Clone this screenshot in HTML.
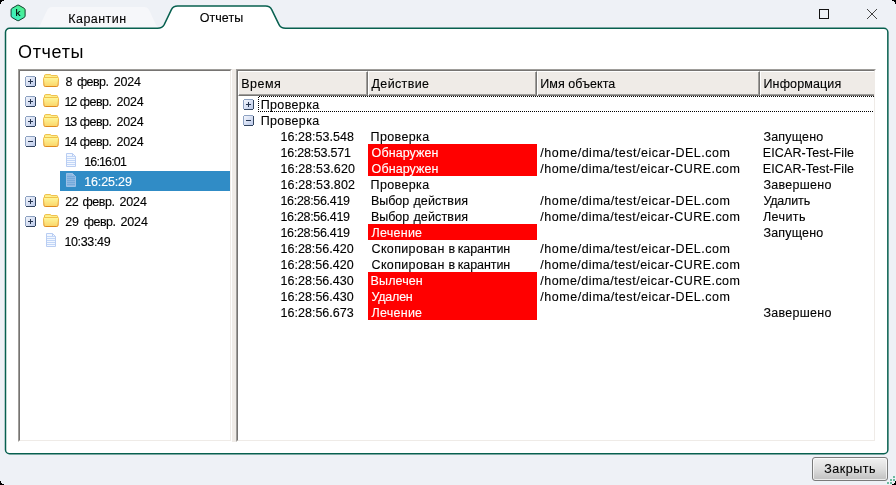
<!DOCTYPE html>
<html lang="ru"><head><meta charset="utf-8"><title>Отчеты</title>
<style>
html,body{margin:0;padding:0;background:#eef1f6}
body{width:896px;height:485px;position:relative;overflow:hidden;background:#eef1f6;font-family:"Liberation Sans",sans-serif;color:#000}
.abs{position:absolute;display:block}
.t{position:absolute;white-space:pre;line-height:16px;height:16px;-webkit-text-stroke:0.12px currentColor}
.frame{position:absolute;box-sizing:border-box;background:#fff;border:1px solid;border-color:#9f9d9a #fff #fff #9f9d9a}
.frame>.in{position:absolute;left:0;top:0;right:0;bottom:0;border:1px solid;border-color:#767472 #efebe7 #efebe7 #767472}
.red{position:absolute;left:368px;width:169px;height:16px;background:#ff0000}
.hs{position:absolute;top:71px;height:25px;box-sizing:border-box;background:#efebe7;border-left:1px solid #fff;border-top:1px solid #fff}
.hs.b{border-right:1px solid #767472;border-bottom:1px solid #767472}
.hs .i{position:absolute;left:0;top:0;right:0;bottom:0;border-right:1px solid #9f9d9a;border-bottom:1px solid #9f9d9a}
</style></head><body>
<svg class="abs" style="left:0;top:0;will-change:transform" width="896" height="485" viewBox="0 0 896 485">
<path d="M34.5 28 C38.5 28 39.8 26 41.2 22.8 L46.8 11 C48.4 7.6 50 7 53 7 H143.5 C146.5 7 148 7.6 149.6 11 L155 22.8 C156.4 26 157.6 28 161.5 28 Z" fill="#f6f7fa"/>
<path d="M9.5 28.25 H157.5 Q162.3 28.25 164.2 24.6 L171.4 9.6 Q173.1 6 177.6 6 H265.6 Q270 6 271.7 9.6 L279 24.6 Q280.8 28.25 285.5 28.25 H883.85 A4 4 0 0 1 887.85 32.25 V449.7 A4 4 0 0 1 883.85 453.7 H9.5 A4 4 0 0 1 5.5 449.7 V32.25 A4 4 0 0 1 9.5 28.25 Z" fill="#fff" stroke="#07604f" stroke-width="1.5"/>
<g shape-rendering="crispEdges" fill="#000">
<rect x="0" y="0" width="4" height="1"/><rect x="0" y="1" width="2" height="1"/><rect x="0" y="2" width="1" height="2"/>
<rect x="892" y="0" width="4" height="1"/><rect x="894" y="1" width="2" height="1"/><rect x="895" y="2" width="1" height="2"/>
<rect x="0" y="484" width="4" height="1"/><rect x="0" y="483" width="2" height="1"/><rect x="0" y="481" width="1" height="2"/>
<rect x="892" y="484" width="4" height="1"/><rect x="894" y="483" width="2" height="1"/><rect x="895" y="481" width="1" height="2"/>
</g>
<g shape-rendering="crispEdges" fill="#6cba9f">
<rect x="893" y="476" width="2" height="2"/><rect x="890" y="479" width="2" height="2"/><rect x="893" y="479" width="2" height="2"/>
<rect x="887" y="482" width="2" height="2"/><rect x="890" y="482" width="2" height="2"/>
</g>
<rect x="819.5" y="9.5" width="9" height="9" fill="none" stroke="#111" stroke-width="1" shape-rendering="crispEdges"/>
<path d="M867 9 L877 19 M877 9 L867 19" stroke="#3a3a3a" stroke-width="0.95" fill="none"/>
<defs><linearGradient id="hx" x1="1" y1="0" x2="0" y2="1"><stop offset="0" stop-color="#52ee7e"/><stop offset="1" stop-color="#38f0d0"/></linearGradient></defs>
<path d="M17.23 5.30 Q18.10 4.80 18.97 5.30 L24.25 8.35 Q25.11 8.85 25.11 9.85 L25.11 15.95 Q25.11 16.95 24.25 17.45 L18.97 20.50 Q18.10 21.00 17.23 20.50 L11.95 17.45 Q11.09 16.95 11.09 15.95 L11.09 9.85 Q11.09 8.85 11.95 8.35 Z" fill="url(#hx)" stroke="#113f2e" stroke-width="1"/>
<text x="15.45" y="16" font-family="Liberation Sans, sans-serif" font-size="9.8" fill="#000" stroke="#000" stroke-width="0.2">k</text>
</svg>

<div class="frame" style="left:18px;top:69px;width:214px;height:373px"><div class="in"></div></div>
<div class="abs" style="left:232px;top:69px;width:4px;height:373px;background:#efebe7"></div>
<div class="frame" style="left:236px;top:69px;width:640px;height:373px"><div class="in"></div></div>
<div class="abs" style="left:60px;top:171px;width:170px;height:20px;background:#308cc6"></div>

<div class="hs b" style="left:238px;width:130px"><div class="i"></div></div>
<div class="hs b" style="left:368px;width:169px"><div class="i"></div></div>
<div class="hs b" style="left:537px;width:223px"><div class="i"></div></div>
<div class="hs" style="left:760px;width:114px;border-bottom:1px solid #767472"><div class="i" style="border-right:none"></div></div>
<div class="red" style="top:144px"></div><div class="red" style="top:160px"></div><div class="red" style="top:224px"></div><div class="red" style="top:272px"></div><div class="red" style="top:288px"></div><div class="red" style="top:304px"></div>
<div class="abs" style="left:258px;top:96px;width:616px;height:1px;background:repeating-linear-gradient(90deg,transparent 0 1px,#000 1px 2px)"></div>
<div class="abs" style="left:258px;top:111px;width:616px;height:1px;background:repeating-linear-gradient(90deg,#000 0 1px,transparent 1px 2px)"></div>
<div class="abs" style="left:258px;top:96px;width:1px;height:16px;background:repeating-linear-gradient(180deg,transparent 0 1px,#000 1px 2px)"></div>
<svg class="abs" style="left:25px;top:76px" width="11" height="11" viewBox="0 0 11 11" shape-rendering="crispEdges">
<defs><linearGradient id="eg" x1="0" y1="0" x2="1" y2="1"><stop offset="0" stop-color="#f2f5fc"/><stop offset="1" stop-color="#bccaea"/></linearGradient></defs>
<rect x="1" y="1" width="9" height="9" fill="url(#eg)"/>
<rect x="1" y="0" width="9" height="1" fill="#8ea2c2"/><rect x="0" y="1" width="1" height="9" fill="#8ea2c2"/>
<rect x="1" y="10" width="9" height="1" fill="#31445f"/><rect x="10" y="1" width="1" height="9" fill="#31445f"/>
<rect x="3" y="5" width="5" height="1" fill="#24344f"/><rect x="5" y="3" width="1" height="5" fill="#24344f"/></svg><svg class="abs" style="left:25px;top:96px" width="11" height="11" viewBox="0 0 11 11" shape-rendering="crispEdges">
<defs><linearGradient id="eg" x1="0" y1="0" x2="1" y2="1"><stop offset="0" stop-color="#f2f5fc"/><stop offset="1" stop-color="#bccaea"/></linearGradient></defs>
<rect x="1" y="1" width="9" height="9" fill="url(#eg)"/>
<rect x="1" y="0" width="9" height="1" fill="#8ea2c2"/><rect x="0" y="1" width="1" height="9" fill="#8ea2c2"/>
<rect x="1" y="10" width="9" height="1" fill="#31445f"/><rect x="10" y="1" width="1" height="9" fill="#31445f"/>
<rect x="3" y="5" width="5" height="1" fill="#24344f"/><rect x="5" y="3" width="1" height="5" fill="#24344f"/></svg><svg class="abs" style="left:25px;top:116px" width="11" height="11" viewBox="0 0 11 11" shape-rendering="crispEdges">
<defs><linearGradient id="eg" x1="0" y1="0" x2="1" y2="1"><stop offset="0" stop-color="#f2f5fc"/><stop offset="1" stop-color="#bccaea"/></linearGradient></defs>
<rect x="1" y="1" width="9" height="9" fill="url(#eg)"/>
<rect x="1" y="0" width="9" height="1" fill="#8ea2c2"/><rect x="0" y="1" width="1" height="9" fill="#8ea2c2"/>
<rect x="1" y="10" width="9" height="1" fill="#31445f"/><rect x="10" y="1" width="1" height="9" fill="#31445f"/>
<rect x="3" y="5" width="5" height="1" fill="#24344f"/><rect x="5" y="3" width="1" height="5" fill="#24344f"/></svg><svg class="abs" style="left:25px;top:196px" width="11" height="11" viewBox="0 0 11 11" shape-rendering="crispEdges">
<defs><linearGradient id="eg" x1="0" y1="0" x2="1" y2="1"><stop offset="0" stop-color="#f2f5fc"/><stop offset="1" stop-color="#bccaea"/></linearGradient></defs>
<rect x="1" y="1" width="9" height="9" fill="url(#eg)"/>
<rect x="1" y="0" width="9" height="1" fill="#8ea2c2"/><rect x="0" y="1" width="1" height="9" fill="#8ea2c2"/>
<rect x="1" y="10" width="9" height="1" fill="#31445f"/><rect x="10" y="1" width="1" height="9" fill="#31445f"/>
<rect x="3" y="5" width="5" height="1" fill="#24344f"/><rect x="5" y="3" width="1" height="5" fill="#24344f"/></svg><svg class="abs" style="left:25px;top:216px" width="11" height="11" viewBox="0 0 11 11" shape-rendering="crispEdges">
<defs><linearGradient id="eg" x1="0" y1="0" x2="1" y2="1"><stop offset="0" stop-color="#f2f5fc"/><stop offset="1" stop-color="#bccaea"/></linearGradient></defs>
<rect x="1" y="1" width="9" height="9" fill="url(#eg)"/>
<rect x="1" y="0" width="9" height="1" fill="#8ea2c2"/><rect x="0" y="1" width="1" height="9" fill="#8ea2c2"/>
<rect x="1" y="10" width="9" height="1" fill="#31445f"/><rect x="10" y="1" width="1" height="9" fill="#31445f"/>
<rect x="3" y="5" width="5" height="1" fill="#24344f"/><rect x="5" y="3" width="1" height="5" fill="#24344f"/></svg><svg class="abs" style="left:25px;top:136px" width="11" height="11" viewBox="0 0 11 11" shape-rendering="crispEdges">
<defs><linearGradient id="eg" x1="0" y1="0" x2="1" y2="1"><stop offset="0" stop-color="#f2f5fc"/><stop offset="1" stop-color="#bccaea"/></linearGradient></defs>
<rect x="1" y="1" width="9" height="9" fill="url(#eg)"/>
<rect x="1" y="0" width="9" height="1" fill="#8ea2c2"/><rect x="0" y="1" width="1" height="9" fill="#8ea2c2"/>
<rect x="1" y="10" width="9" height="1" fill="#31445f"/><rect x="10" y="1" width="1" height="9" fill="#31445f"/>
<rect x="3" y="5" width="5" height="1" fill="#24344f"/></svg><svg class="abs" style="left:43px;top:74px" width="16" height="13" viewBox="0 0 16 13">
<defs><linearGradient id="fg" x1="0" y1="0" x2="0" y2="1"><stop offset="0" stop-color="#fdf79c"/><stop offset="1" stop-color="#fbd468"/></linearGradient>
<linearGradient id="fb" x1="0" y1="0" x2="0" y2="1"><stop offset="0" stop-color="#f3c24a"/><stop offset="1" stop-color="#e08a1e"/></linearGradient></defs>
<path d="M1.5 3.5 V1.8 Q1.5 0.6 2.7 0.6 H7.2 Q8 0.6 8.3 1.6 H13.8 Q14.6 1.6 14.6 2.6 V4" fill="#fcf390" stroke="#eebb44" stroke-width="1"/>
<path d="M1.1 3.5 H14.9 Q15.6 3.5 15.5 4.4 L15.1 11.2 Q15 12.5 13.8 12.5 H2.2 Q1 12.5 0.9 11.2 L0.5 4.4 Q0.4 3.5 1.1 3.5 Z" fill="url(#fg)" stroke="url(#fb)" stroke-width="1"/>
</svg><svg class="abs" style="left:43px;top:94px" width="16" height="13" viewBox="0 0 16 13">
<defs><linearGradient id="fg" x1="0" y1="0" x2="0" y2="1"><stop offset="0" stop-color="#fdf79c"/><stop offset="1" stop-color="#fbd468"/></linearGradient>
<linearGradient id="fb" x1="0" y1="0" x2="0" y2="1"><stop offset="0" stop-color="#f3c24a"/><stop offset="1" stop-color="#e08a1e"/></linearGradient></defs>
<path d="M1.5 3.5 V1.8 Q1.5 0.6 2.7 0.6 H7.2 Q8 0.6 8.3 1.6 H13.8 Q14.6 1.6 14.6 2.6 V4" fill="#fcf390" stroke="#eebb44" stroke-width="1"/>
<path d="M1.1 3.5 H14.9 Q15.6 3.5 15.5 4.4 L15.1 11.2 Q15 12.5 13.8 12.5 H2.2 Q1 12.5 0.9 11.2 L0.5 4.4 Q0.4 3.5 1.1 3.5 Z" fill="url(#fg)" stroke="url(#fb)" stroke-width="1"/>
</svg><svg class="abs" style="left:43px;top:114px" width="16" height="13" viewBox="0 0 16 13">
<defs><linearGradient id="fg" x1="0" y1="0" x2="0" y2="1"><stop offset="0" stop-color="#fdf79c"/><stop offset="1" stop-color="#fbd468"/></linearGradient>
<linearGradient id="fb" x1="0" y1="0" x2="0" y2="1"><stop offset="0" stop-color="#f3c24a"/><stop offset="1" stop-color="#e08a1e"/></linearGradient></defs>
<path d="M1.5 3.5 V1.8 Q1.5 0.6 2.7 0.6 H7.2 Q8 0.6 8.3 1.6 H13.8 Q14.6 1.6 14.6 2.6 V4" fill="#fcf390" stroke="#eebb44" stroke-width="1"/>
<path d="M1.1 3.5 H14.9 Q15.6 3.5 15.5 4.4 L15.1 11.2 Q15 12.5 13.8 12.5 H2.2 Q1 12.5 0.9 11.2 L0.5 4.4 Q0.4 3.5 1.1 3.5 Z" fill="url(#fg)" stroke="url(#fb)" stroke-width="1"/>
</svg><svg class="abs" style="left:43px;top:134px" width="16" height="13" viewBox="0 0 16 13">
<defs><linearGradient id="fg" x1="0" y1="0" x2="0" y2="1"><stop offset="0" stop-color="#fdf79c"/><stop offset="1" stop-color="#fbd468"/></linearGradient>
<linearGradient id="fb" x1="0" y1="0" x2="0" y2="1"><stop offset="0" stop-color="#f3c24a"/><stop offset="1" stop-color="#e08a1e"/></linearGradient></defs>
<path d="M1.5 3.5 V1.8 Q1.5 0.6 2.7 0.6 H7.2 Q8 0.6 8.3 1.6 H13.8 Q14.6 1.6 14.6 2.6 V4" fill="#fcf390" stroke="#eebb44" stroke-width="1"/>
<path d="M1.1 3.5 H14.9 Q15.6 3.5 15.5 4.4 L15.1 11.2 Q15 12.5 13.8 12.5 H2.2 Q1 12.5 0.9 11.2 L0.5 4.4 Q0.4 3.5 1.1 3.5 Z" fill="url(#fg)" stroke="url(#fb)" stroke-width="1"/>
</svg><svg class="abs" style="left:43px;top:194px" width="16" height="13" viewBox="0 0 16 13">
<defs><linearGradient id="fg" x1="0" y1="0" x2="0" y2="1"><stop offset="0" stop-color="#fdf79c"/><stop offset="1" stop-color="#fbd468"/></linearGradient>
<linearGradient id="fb" x1="0" y1="0" x2="0" y2="1"><stop offset="0" stop-color="#f3c24a"/><stop offset="1" stop-color="#e08a1e"/></linearGradient></defs>
<path d="M1.5 3.5 V1.8 Q1.5 0.6 2.7 0.6 H7.2 Q8 0.6 8.3 1.6 H13.8 Q14.6 1.6 14.6 2.6 V4" fill="#fcf390" stroke="#eebb44" stroke-width="1"/>
<path d="M1.1 3.5 H14.9 Q15.6 3.5 15.5 4.4 L15.1 11.2 Q15 12.5 13.8 12.5 H2.2 Q1 12.5 0.9 11.2 L0.5 4.4 Q0.4 3.5 1.1 3.5 Z" fill="url(#fg)" stroke="url(#fb)" stroke-width="1"/>
</svg><svg class="abs" style="left:43px;top:214px" width="16" height="13" viewBox="0 0 16 13">
<defs><linearGradient id="fg" x1="0" y1="0" x2="0" y2="1"><stop offset="0" stop-color="#fdf79c"/><stop offset="1" stop-color="#fbd468"/></linearGradient>
<linearGradient id="fb" x1="0" y1="0" x2="0" y2="1"><stop offset="0" stop-color="#f3c24a"/><stop offset="1" stop-color="#e08a1e"/></linearGradient></defs>
<path d="M1.5 3.5 V1.8 Q1.5 0.6 2.7 0.6 H7.2 Q8 0.6 8.3 1.6 H13.8 Q14.6 1.6 14.6 2.6 V4" fill="#fcf390" stroke="#eebb44" stroke-width="1"/>
<path d="M1.1 3.5 H14.9 Q15.6 3.5 15.5 4.4 L15.1 11.2 Q15 12.5 13.8 12.5 H2.2 Q1 12.5 0.9 11.2 L0.5 4.4 Q0.4 3.5 1.1 3.5 Z" fill="url(#fg)" stroke="url(#fb)" stroke-width="1"/>
</svg><svg class="abs" style="left:66px;top:153px" width="10" height="14" viewBox="0 0 10 14">
<path d="M0.5 0.5 H6.5 L9.5 3.5 V13.5 H0.5 Z" fill="#f2f7ff" stroke="#b9cdf2" stroke-width="1"/>
<path d="M6.5 0.5 V3.5 H9.5" fill="none" stroke="#b9cdf2" stroke-width="1"/><rect x="1" y="3" width="8" height="1" fill="#c2d6f7" shape-rendering="crispEdges"/><rect x="1" y="5" width="8" height="1" fill="#c2d6f7" shape-rendering="crispEdges"/><rect x="1" y="7" width="8" height="1" fill="#c2d6f7" shape-rendering="crispEdges"/><rect x="1" y="9" width="8" height="1" fill="#c2d6f7" shape-rendering="crispEdges"/><rect x="1" y="11" width="8" height="1" fill="#c2d6f7" shape-rendering="crispEdges"/></svg><svg class="abs" style="left:66px;top:173px" width="10" height="14" viewBox="0 0 10 14">
<path d="M0.5 0.5 H6.5 L9.5 3.5 V13.5 H0.5 Z" fill="#8bb8e2" stroke="#9cc0e6" stroke-width="1"/>
<path d="M6.5 0.5 V3.5 H9.5" fill="none" stroke="#9cc0e6" stroke-width="1"/><rect x="1" y="3" width="8" height="1" fill="#74a9db" shape-rendering="crispEdges"/><rect x="1" y="5" width="8" height="1" fill="#74a9db" shape-rendering="crispEdges"/><rect x="1" y="7" width="8" height="1" fill="#74a9db" shape-rendering="crispEdges"/><rect x="1" y="9" width="8" height="1" fill="#74a9db" shape-rendering="crispEdges"/><rect x="1" y="11" width="8" height="1" fill="#74a9db" shape-rendering="crispEdges"/></svg><svg class="abs" style="left:46px;top:233px" width="10" height="14" viewBox="0 0 10 14">
<path d="M0.5 0.5 H6.5 L9.5 3.5 V13.5 H0.5 Z" fill="#f2f7ff" stroke="#b9cdf2" stroke-width="1"/>
<path d="M6.5 0.5 V3.5 H9.5" fill="none" stroke="#b9cdf2" stroke-width="1"/><rect x="1" y="3" width="8" height="1" fill="#c2d6f7" shape-rendering="crispEdges"/><rect x="1" y="5" width="8" height="1" fill="#c2d6f7" shape-rendering="crispEdges"/><rect x="1" y="7" width="8" height="1" fill="#c2d6f7" shape-rendering="crispEdges"/><rect x="1" y="9" width="8" height="1" fill="#c2d6f7" shape-rendering="crispEdges"/><rect x="1" y="11" width="8" height="1" fill="#c2d6f7" shape-rendering="crispEdges"/></svg><svg class="abs" style="left:243px;top:99px" width="11" height="11" viewBox="0 0 11 11" shape-rendering="crispEdges">
<defs><linearGradient id="eg" x1="0" y1="0" x2="1" y2="1"><stop offset="0" stop-color="#f2f5fc"/><stop offset="1" stop-color="#bccaea"/></linearGradient></defs>
<rect x="1" y="1" width="9" height="9" fill="url(#eg)"/>
<rect x="1" y="0" width="9" height="1" fill="#8ea2c2"/><rect x="0" y="1" width="1" height="9" fill="#8ea2c2"/>
<rect x="1" y="10" width="9" height="1" fill="#31445f"/><rect x="10" y="1" width="1" height="9" fill="#31445f"/>
<rect x="3" y="5" width="5" height="1" fill="#24344f"/><rect x="5" y="3" width="1" height="5" fill="#24344f"/></svg><svg class="abs" style="left:243px;top:115px" width="11" height="11" viewBox="0 0 11 11" shape-rendering="crispEdges">
<defs><linearGradient id="eg" x1="0" y1="0" x2="1" y2="1"><stop offset="0" stop-color="#f2f5fc"/><stop offset="1" stop-color="#bccaea"/></linearGradient></defs>
<rect x="1" y="1" width="9" height="9" fill="url(#eg)"/>
<rect x="1" y="0" width="9" height="1" fill="#8ea2c2"/><rect x="0" y="1" width="1" height="9" fill="#8ea2c2"/>
<rect x="1" y="10" width="9" height="1" fill="#31445f"/><rect x="10" y="1" width="1" height="9" fill="#31445f"/>
<rect x="3" y="5" width="5" height="1" fill="#24344f"/></svg>
<div class="abs" style="left:812px;top:457px;width:76px;height:24px;box-sizing:border-box;border:1px solid #7a7a7a;border-radius:3px;background:linear-gradient(#f1f1f1,#dddddd 50%,#c0c0c0);box-shadow:inset 0 0 0 1px rgba(255,255,255,.7)"></div>
<div class="abs" style="left:0;top:0;width:896px;height:485px;will-change:transform"><div class="chrome"><span class="t" style="left:68.30px;top:10.67px;font-size:12.5px;letter-spacing:0.450px">Карантин</span><span class="t" style="left:199.70px;top:9.67px;font-size:12.5px;letter-spacing:0.056px">Отчеты</span><span class="t" style="left:18.00px;top:43.76px;font-size:18px;letter-spacing:0.664px;-webkit-text-stroke:0">Отчеты</span><span class="t" style="left:824.30px;top:460.67px;font-size:12.5px;letter-spacing:0.528px">Закрыть</span></div>
<div class="tree"><span class="t" style="left:65.60px;top:73.67px;font-size:12.5px;letter-spacing:0.000px">8 </span><span class="t" style="left:76.90px;top:73.67px;font-size:12.5px;letter-spacing:-0.582px">февр. </span><span class="t" style="left:113.75px;top:73.67px;font-size:12.5px;letter-spacing:-0.202px">2024</span><span class="t" style="left:64.45px;top:93.67px;font-size:12.5px;letter-spacing:-1.100px">12 </span><span class="t" style="left:79.75px;top:93.67px;font-size:12.5px;letter-spacing:-0.520px">февр. </span><span class="t" style="left:116.50px;top:93.67px;font-size:12.5px;letter-spacing:-0.202px">2024</span><span class="t" style="left:64.45px;top:113.67px;font-size:12.5px;letter-spacing:-1.100px">13 </span><span class="t" style="left:79.75px;top:113.67px;font-size:12.5px;letter-spacing:-0.520px">февр. </span><span class="t" style="left:116.50px;top:113.67px;font-size:12.5px;letter-spacing:-0.202px">2024</span><span class="t" style="left:64.45px;top:133.67px;font-size:12.5px;letter-spacing:-1.100px">14 </span><span class="t" style="left:79.75px;top:133.67px;font-size:12.5px;letter-spacing:-0.520px">февр. </span><span class="t" style="left:116.50px;top:133.67px;font-size:12.5px;letter-spacing:-0.202px">2024</span><span class="t" style="left:84.20px;top:153.67px;font-size:12.5px;letter-spacing:-0.858px">16:16:01</span><span class="t" style="left:84.20px;top:173.67px;font-size:12.5px;letter-spacing:-0.144px;color:#fff">16:25:29</span><span class="t" style="left:65.25px;top:193.67px;font-size:12.5px;letter-spacing:-0.452px">22 </span><span class="t" style="left:82.50px;top:193.67px;font-size:12.5px;letter-spacing:-0.482px">февр. </span><span class="t" style="left:119.40px;top:193.67px;font-size:12.5px;letter-spacing:-0.119px">2024</span><span class="t" style="left:65.25px;top:213.67px;font-size:12.5px;letter-spacing:-0.202px">29 </span><span class="t" style="left:83.75px;top:213.67px;font-size:12.5px;letter-spacing:-0.545px">февр. </span><span class="t" style="left:120.40px;top:213.67px;font-size:12.5px;letter-spacing:-0.119px">2024</span><span class="t" style="left:64.40px;top:233.67px;font-size:12.5px;letter-spacing:-0.344px">10:33:49</span></div>
<div class="thead"><span class="t" style="left:241.25px;top:75.67px;font-size:12.5px;letter-spacing:0.479px">Время</span><span class="t" style="left:371.50px;top:75.67px;font-size:12.5px;letter-spacing:0.357px">Действие</span><span class="t" style="left:540.25px;top:75.67px;font-size:12.5px;letter-spacing:0.063px">Имя объекта</span><span class="t" style="left:763.50px;top:75.67px;font-size:12.5px;letter-spacing:0.126px">Информация</span></div>
<div class="row"><span class="t" style="left:260.70px;top:96.67px;font-size:12.5px;letter-spacing:0.366px">Проверка</span></div>
<div class="row"><span class="t" style="left:260.70px;top:112.67px;font-size:12.5px;letter-spacing:0.366px">Проверка</span></div>
<div class="row"><span class="t" style="left:280.45px;top:128.67px;font-size:12.5px;letter-spacing:0.047px">16:28:53.548</span><span class="t" style="left:370.60px;top:128.67px;font-size:12.5px;letter-spacing:0.366px">Проверка</span><span class="t" style="left:763.40px;top:128.67px;font-size:12.5px;letter-spacing:0.197px">Запущено</span></div>
<div class="row"><span class="t" style="left:280.45px;top:144.67px;font-size:12.5px;letter-spacing:-0.221px">16:28:53.571</span><span class="t" style="left:371.60px;top:144.67px;font-size:12.5px;letter-spacing:0.093px;color:#fff">Обнаружен</span><span class="t" style="left:540.30px;top:144.67px;font-size:12.5px;letter-spacing:0.521px">/home/dima/test/eicar-DEL.com</span><span class="t" style="left:762.80px;top:144.67px;font-size:12.5px;letter-spacing:0.118px">EICAR-Test-File</span></div>
<div class="row"><span class="t" style="left:280.45px;top:160.67px;font-size:12.5px;letter-spacing:0.142px">16:28:53.620</span><span class="t" style="left:371.60px;top:160.67px;font-size:12.5px;letter-spacing:0.093px;color:#fff">Обнаружен</span><span class="t" style="left:540.30px;top:160.67px;font-size:12.5px;letter-spacing:0.465px">/home/dima/test/eicar-CURE.com</span><span class="t" style="left:762.80px;top:160.67px;font-size:12.5px;letter-spacing:0.118px">EICAR-Test-File</span></div>
<div class="row"><span class="t" style="left:280.45px;top:176.67px;font-size:12.5px;letter-spacing:0.142px">16:28:53.802</span><span class="t" style="left:370.60px;top:176.67px;font-size:12.5px;letter-spacing:0.366px">Проверка</span><span class="t" style="left:763.40px;top:176.67px;font-size:12.5px;letter-spacing:0.276px">Завершено</span></div>
<div class="row"><span class="t" style="left:280.45px;top:192.67px;font-size:12.5px;letter-spacing:-0.312px">16:28:56.419</span><span class="t" style="left:370.90px;top:192.67px;font-size:12.5px;letter-spacing:-0.033px">Выбор </span><span class="t" style="left:413.40px;top:192.67px;font-size:12.5px;letter-spacing:0.153px">действия</span><span class="t" style="left:540.30px;top:192.67px;font-size:12.5px;letter-spacing:0.521px">/home/dima/test/eicar-DEL.com</span><span class="t" style="left:763.40px;top:192.67px;font-size:12.5px;letter-spacing:-0.160px">Удалить</span></div>
<div class="row"><span class="t" style="left:280.45px;top:208.67px;font-size:12.5px;letter-spacing:-0.312px">16:28:56.419</span><span class="t" style="left:370.90px;top:208.67px;font-size:12.5px;letter-spacing:-0.033px">Выбор </span><span class="t" style="left:413.40px;top:208.67px;font-size:12.5px;letter-spacing:0.153px">действия</span><span class="t" style="left:540.30px;top:208.67px;font-size:12.5px;letter-spacing:0.465px">/home/dima/test/eicar-CURE.com</span><span class="t" style="left:762.90px;top:208.67px;font-size:12.5px;letter-spacing:0.428px">Лечить</span></div>
<div class="row"><span class="t" style="left:280.45px;top:224.67px;font-size:12.5px;letter-spacing:-0.312px">16:28:56.419</span><span class="t" style="left:371.60px;top:224.67px;font-size:12.5px;letter-spacing:0.235px;color:#fff">Лечение</span><span class="t" style="left:763.40px;top:224.67px;font-size:12.5px;letter-spacing:0.197px">Запущено</span></div>
<div class="row"><span class="t" style="left:280.45px;top:240.67px;font-size:12.5px;letter-spacing:0.024px">16:28:56.420</span><span class="t" style="left:371.50px;top:240.67px;font-size:12.5px;letter-spacing:0.356px">Скопирован </span><span class="t" style="left:448.40px;top:240.67px;font-size:12.5px;letter-spacing:0.000px">в </span><span class="t" style="left:457.70px;top:240.67px;font-size:12.5px;letter-spacing:-0.087px">карантин</span><span class="t" style="left:540.30px;top:240.67px;font-size:12.5px;letter-spacing:0.521px">/home/dima/test/eicar-DEL.com</span></div>
<div class="row"><span class="t" style="left:280.45px;top:256.67px;font-size:12.5px;letter-spacing:0.024px">16:28:56.420</span><span class="t" style="left:371.50px;top:256.67px;font-size:12.5px;letter-spacing:0.356px">Скопирован </span><span class="t" style="left:448.40px;top:256.67px;font-size:12.5px;letter-spacing:0.000px">в </span><span class="t" style="left:457.70px;top:256.67px;font-size:12.5px;letter-spacing:-0.087px">карантин</span><span class="t" style="left:540.30px;top:256.67px;font-size:12.5px;letter-spacing:0.465px">/home/dima/test/eicar-CURE.com</span></div>
<div class="row"><span class="t" style="left:280.45px;top:272.67px;font-size:12.5px;letter-spacing:0.033px">16:28:56.430</span><span class="t" style="left:370.60px;top:272.67px;font-size:12.5px;letter-spacing:0.106px;color:#fff">Вылечен</span><span class="t" style="left:540.30px;top:272.67px;font-size:12.5px;letter-spacing:0.465px">/home/dima/test/eicar-CURE.com</span></div>
<div class="row"><span class="t" style="left:280.45px;top:288.67px;font-size:12.5px;letter-spacing:0.033px">16:28:56.430</span><span class="t" style="left:371.60px;top:288.67px;font-size:12.5px;letter-spacing:-0.241px;color:#fff">Удален</span><span class="t" style="left:540.30px;top:288.67px;font-size:12.5px;letter-spacing:0.521px">/home/dima/test/eicar-DEL.com</span></div>
<div class="row"><span class="t" style="left:280.45px;top:304.67px;font-size:12.5px;letter-spacing:0.033px">16:28:56.673</span><span class="t" style="left:371.60px;top:304.67px;font-size:12.5px;letter-spacing:0.235px;color:#fff">Лечение</span><span class="t" style="left:763.40px;top:304.67px;font-size:12.5px;letter-spacing:0.276px">Завершено</span></div></div>
</body></html>
